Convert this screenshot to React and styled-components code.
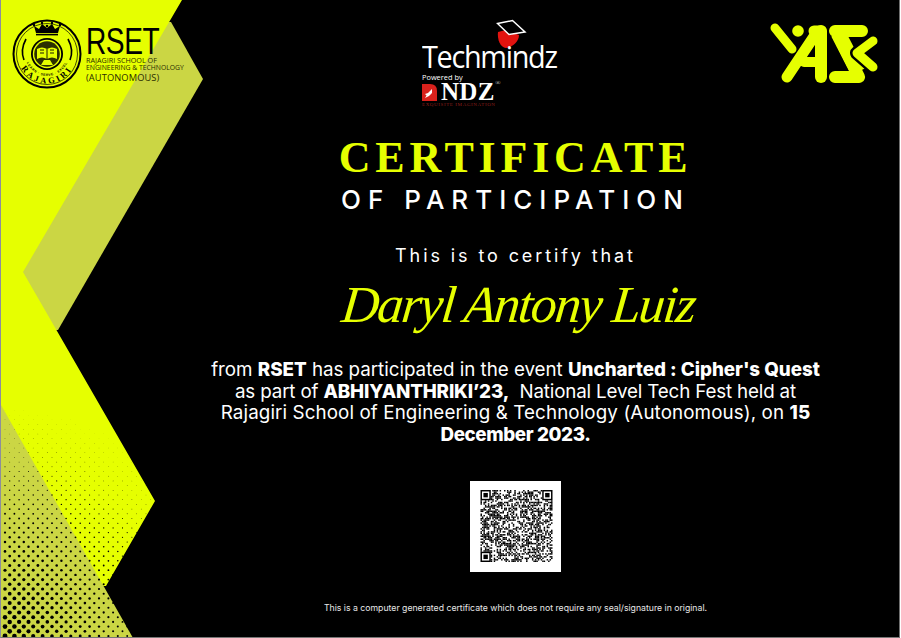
import React from 'react'
import styled, { createGlobalStyle } from 'styled-components'

const LIME = '#e6ff00'
const OLIVE = '#cbd644'

const GlobalStyle = createGlobalStyle`
  html, body {
    margin: 0;
    padding: 0;
    background: #fff;
  }
`

const Certificate = styled.div`
  position: relative;
  width: 900px;
  height: 638px;
  box-sizing: border-box;
  background: #000;
  border-left: 1px solid #8d8d9c;
  border-right: 1px solid #6f6f6f;
  border-bottom: 1px solid #777;
  overflow: hidden;
  font-family: Inter, "Liberation Sans", sans-serif;
  color: #fff;
`

const Shards = styled.svg`
  position: absolute;
  left: 0;
  top: 0;
`

const Content = styled.div`
  position: relative;
  display: flex;
  flex-direction: column;
`

const Header = styled.header`
  display: grid;
  grid-template-columns: 411px 343px 1fr;
  height: 132px;
  padding-left: 10px;
`

const RsetLogo = styled.div`
  display: flex;
  gap: 3px;
  padding-top: 18px;
  align-items: flex-start;
`

const RsetText = styled.div`
  display: flex;
  flex-direction: column;
  padding-top: 9px;
  font-family: "Open Sans", sans-serif;
`

const RsetName = styled.div`
  font-family: "Liberation Sans", sans-serif;
  font-size: 37px;
  line-height: 29px;
  letter-spacing: -0.6px;
  color: #000;
  transform: scaleX(0.76);
  transform-origin: left center;
`

const RsetLine = styled.div`
  font-size: ${p => p.$size}px;
  line-height: ${p => p.$height}px;
  letter-spacing: ${p => p.$spacing || 0}px;
  white-space: nowrap;
  color: #2a2d00;
`

const TechLogo = styled.div`
  position: relative;
  display: flex;
  flex-direction: column;
  padding-top: 41px;
`

const CapMark = styled.div`
  position: absolute;
  left: 74px;
  top: 18px;
`

const TechName = styled.div`
  font-family: "Open Sans", sans-serif;
  font-size: 31px;
  line-height: 30px;
  letter-spacing: -1.4px;
  color: #fff;
  transform: scaleX(0.93);
  transform-origin: left center;
`

const PoweredBy = styled.div`
  font-family: "Open Sans", sans-serif;
  font-size: 7.4px;
  line-height: 9px;
  margin-top: 2px;
`

const NdzRow = styled.div`
  display: flex;
  align-items: center;
  gap: 4px;
  height: 19px;
`

const NdzName = styled.div`
  position: relative;
  font-family: "Liberation Serif", serif;
  font-weight: 700;
  font-size: 25px;
  line-height: 19px;
  letter-spacing: 0.3px;
`

const Registered = styled.span`
  position: absolute;
  right: -6px;
  top: -3px;
  font-size: 7px;
  line-height: 8px;
  font-weight: 400;
  letter-spacing: 0;
  color: #ccc;
`

const NdzTag = styled.div`
  font-family: "Liberation Serif", serif;
  font-size: 5px;
  line-height: 6px;
  letter-spacing: 0.6px;
  color: #8d1f1a;
  white-space: nowrap;
  margin-top: 1px;
`

const YasLogo = styled.div`
  padding-top: 20px;
`

const Main = styled.main`
  display: flex;
  flex-direction: column;
  align-items: center;
  padding-left: 131px;
`

const Title = styled.h1`
  margin: 1px 0 0;
  font-family: "Liberation Serif", serif;
  font-weight: 700;
  font-size: 44px;
  line-height: 50px;
  letter-spacing: 4.8px;
  color: ${LIME};
`

const Subtitle = styled.h2`
  margin: 2px 0 0;
  font-weight: 500;
  font-size: 26px;
  line-height: 30px;
  letter-spacing: 7px;
  color: #fff;
`

const Certify = styled.p`
  margin: 29px 0 0;
  font-weight: 400;
  font-size: 18px;
  line-height: 24px;
  letter-spacing: 2.9px;
`

const Recipient = styled.div`
  margin: 4px 0 0 5px;
  font-family: "Liberation Serif", serif;
  font-style: italic;
  font-size: 52px;
  line-height: 66px;
  letter-spacing: -1.8px;
  color: ${LIME};
  transform: skewX(-6deg);
`

const Statement = styled.div`
  margin: 21px 0 0;
  text-align: center;
  font-size: 18.8px;
  line-height: 21.7px;
  font-weight: 400;
  white-space: nowrap;

  b {
    font-weight: 800;
  }
`

const StatementLine = styled.div`
  letter-spacing: ${p => p.$spacing}px;
`

const QrCard = styled.div`
  margin-top: 35px;
  width: 91px;
  height: 91px;
  padding: 9px 8px 10px 10px;
  box-sizing: border-box;
  background: #fff;
`

const Disclaimer = styled.p`
  margin: 31px 0 0;
  font-size: 8.7px;
  line-height: 11px;
  color: #e8e8e8;
`

// halftone dots fading out from the bottom left corner
const dots = []
for (let i = -60; i < 60; i++) {
  for (let j = -60; j < 60; j++) {
    const x = 4 + (i + j) * 4.7
    const y = 636 + (i - j) * 4.7
    if (x < 0 || x > 170 || y < 380 || y > 638) continue
    const d = Math.hypot(x, 638 - y)
    const r = 2.5 * Math.pow(Math.max(0, 1 - d / 270), 1.6)
    if (r > 0.12) dots.push({ x, y, r })
  }
}

const ShardsArt = () => (
  <Shards width="202" height="638" viewBox="0 0 202 638">
    <polygon points="160,22 170,22 202,79 57,330 40,330 10,272" fill={OLIVE} />
    <polygon points="0,0 181,0 22,272 154,501 105,586 0,586" fill={LIME} />
    <polygon points="0,405 132,638 0,638" fill={OLIVE} />
    <g fill="#000">
      {dots.map(d => <circle key={`${d.x}-${d.y}`} cx={d.x} cy={d.y} r={d.r} />)}
    </g>
  </Shards>
)

const Seal = () => (
  <svg width="72" height="72" viewBox="0 0 72 72">
    <circle cx="36" cy="36" r="33.5" fill="none" stroke="#000" strokeWidth="2" />
    <circle cx="36" cy="36" r="30.5" fill="none" stroke="#000" strokeWidth="0.7" />
    {/* crown */}
    <path d="M25 15 L23 8 L28 11 L31 6 L36 10 L41 6 L44 11 L49 8 L47 15 Z" fill="#000" />
    <circle cx="23" cy="7" r="1.2" fill="#000" />
    <circle cx="31" cy="5" r="1.2" fill="#000" />
    <circle cx="41" cy="5" r="1.2" fill="#000" />
    <circle cx="49" cy="7" r="1.2" fill="#000" />
    <circle cx="36" cy="8" r="1.3" fill="#000" />
    <rect x="25" y="15.8" width="22" height="1.6" fill="#000" />
    {/* side sprigs */}
    <path d="M15 21 Q9 32 13 42" fill="none" stroke="#000" strokeWidth="1.6" />
    <path d="M57 21 Q63 32 59 42" fill="none" stroke="#000" strokeWidth="1.6" />
    {/* book emblem */}
    <circle cx="36" cy="36" r="16" fill="#000" />
    <circle cx="36" cy="36" r="14.2" fill={LIME} />
    <circle cx="36" cy="36" r="12.8" fill="#2c3000" />
    <path d="M26 31 Q31 28 36 31 Q41 28 46 31 V41 Q41 38 36 41 Q31 38 26 41 Z" fill={LIME} />
    <path d="M36 31 V41 M29 32 H33 M29 35 H33 M39 32 H43 M39 35 H43" stroke="#000" strokeWidth="0.9" fill="none" />
    <path d="M30 47 L33 42 H39 L42 47 Z" fill={LIME} />
    <path id="sealBottom" d="M6.5 36 A29.5 29.5 0 0 0 65.5 36" fill="none" />
    <path id="sealInner" d="M14 36 A22 22 0 0 0 58 36" fill="none" />
    <text fontFamily="Liberation Serif, serif" fontSize="8.5" fontWeight="700" letterSpacing="2.6" fill="#000">
      <textPath href="#sealBottom" startOffset="50%" textAnchor="middle">RAJAGIRI</textPath>
    </text>
    <text fontFamily="Liberation Sans, sans-serif" fontSize="3.4" fontWeight="700" letterSpacing="0.5" fill="#000">
      <textPath href="#sealInner" startOffset="50%" textAnchor="middle">LEARN · SERVE · EXCEL</textPath>
    </text>
  </svg>
)

const CapIcon = () => (
  <svg width="32" height="32" viewBox="0 0 32 32">
    <path d="M2 14 C1 24 6 30 10 30 C15 30 23 24 23 17 L10 12 Z" fill="#e2130f" />
    <path d="M1.5 5.5 L16.5 2.5 L29 14 L13 16.5 Z" fill="#000" stroke="#fff" strokeWidth="1.5" strokeLinejoin="miter" />
  </svg>
)

const NdzMark = () => (
  <svg width="15" height="18" viewBox="0 0 15 18">
    <path d="M0 1 H8 Q15 1 15 8 V18 H0 Z" fill="#d9211c" />
    <path d="M3 15 L6 10 L10 6 L10 10 L7 13 Z M3 11 L6 10 L5 13 Z" fill="#fff" />
  </svg>
)

// drawn in page coordinates of the crop, 765,20
const YasMark = () => (
  <svg width="115" height="70" viewBox="765 20 115 70" fill="none" stroke={LIME} strokeLinecap="round" strokeLinejoin="round">
    <path d="M775 28 L792 49" strokeWidth="9" />
    <circle cx="798" cy="31" r="5.8" fill={LIME} stroke="none" />
    <path d="M787 77 L817 32" strokeWidth="11" />
    <path d="M821 31 V77" strokeWidth="12" />
    <path d="M804 62 H821" strokeWidth="10" />
    <path d="M814 31 H821" strokeWidth="11" />
    <path d="M862 31 H835 H836 L859 77 H835" strokeWidth="12" />
    <path d="M838 33 L858 72" strokeWidth="15" strokeLinecap="butt" />
    <path d="M873 41 L857 53 L873 67" stroke="#000" strokeWidth="14" />
    <path d="M873 41 L857 53 L873 67" strokeWidth="9" />
  </svg>
)

const qrSize = 49
const isFinder = (x, y) => {
  const inBox = (bx, by) => x >= bx && x < bx + 8 && y >= by && y < by + 8
  return inBox(-1, -1) || inBox(qrSize - 7, -1) || inBox(-1, qrSize - 7)
}

// modules are only noise, the real code can't be read off the screenshot
let seed = 20231215
const nextBit = () => {
  seed = (seed * 1664525 + 1013904223) >>> 0
  return (seed >>> 16) % 2 === 0
}
const qrCells = []
for (let y = 0; y < qrSize; y++) {
  for (let x = 0; x < qrSize; x++) {
    if (!isFinder(x, y) && nextBit()) qrCells.push([x, y])
  }
}

const Finder = ({ x, y }) => (
  <>
    <rect x={x} y={y} width="7" height="7" fill="#000" />
    <rect x={x + 1} y={y + 1} width="5" height="5" fill="#fff" />
    <rect x={x + 2} y={y + 2} width="3" height="3" fill="#000" />
  </>
)

const QrCode = () => (
  <svg width="73" height="72" viewBox={`0 0 ${qrSize} ${qrSize}`}>
    {qrCells.map(([x, y]) => <rect key={`${x}-${y}`} x={x} y={y} width="1" height="1" fill="#000" />)}
    <Finder x={0} y={0} />
    <Finder x={qrSize - 7} y={0} />
    <Finder x={0} y={qrSize - 7} />
  </svg>
)

const App = () => (
  <>
    <GlobalStyle />
    <Certificate>
      <ShardsArt />
      <Content>
        <Header>
          <RsetLogo>
            <Seal />
            <RsetText>
              <RsetName>RSET</RsetName>
              <RsetLine $size={7.2} $height={8}>RAJAGIRI SCHOOL OF</RsetLine>
              <RsetLine $size={6.8} $height={8}>ENGINEERING &amp; TECHNOLOGY</RsetLine>
              <RsetLine $size={9.3} $height={11} $spacing={0.1}>(AUTONOMOUS)</RsetLine>
            </RsetText>
          </RsetLogo>
          <TechLogo>
            <CapMark><CapIcon /></CapMark>
            <TechName>Techmindz</TechName>
            <PoweredBy>Powered by</PoweredBy>
            <NdzRow>
              <NdzMark />
              <NdzName>NDZ<Registered>®</Registered></NdzName>
            </NdzRow>
            <NdzTag>EXQUISITE IMAGINATION</NdzTag>
          </TechLogo>
          <YasLogo><YasMark /></YasLogo>
        </Header>
        <Main>
          <Title>CERTIFICATE</Title>
          <Subtitle>OF PARTICIPATION</Subtitle>
          <Certify>This is to certify that</Certify>
          <Recipient>Daryl Antony Luiz</Recipient>
          <Statement>
            <StatementLine $spacing={-0.03}>from <b>RSET</b> has participated in the event <b>Uncharted : Cipher's Quest</b></StatementLine>
            <StatementLine $spacing={-0.16}>as part of <b>ABHIYANTHRIKI’23,</b>&nbsp; National Level Tech Fest held at</StatementLine>
            <StatementLine $spacing={0.1}>Rajagiri School of Engineering &amp; Technology (Autonomous), on <b>15</b></StatementLine>
            <StatementLine $spacing={-0.4}><b>December 2023.</b></StatementLine>
          </Statement>
          <QrCard><QrCode /></QrCard>
          <Disclaimer>This is a computer generated certificate which does not require any seal/signature in original.</Disclaimer>
        </Main>
      </Content>
    </Certificate>
  </>
)

export default App
